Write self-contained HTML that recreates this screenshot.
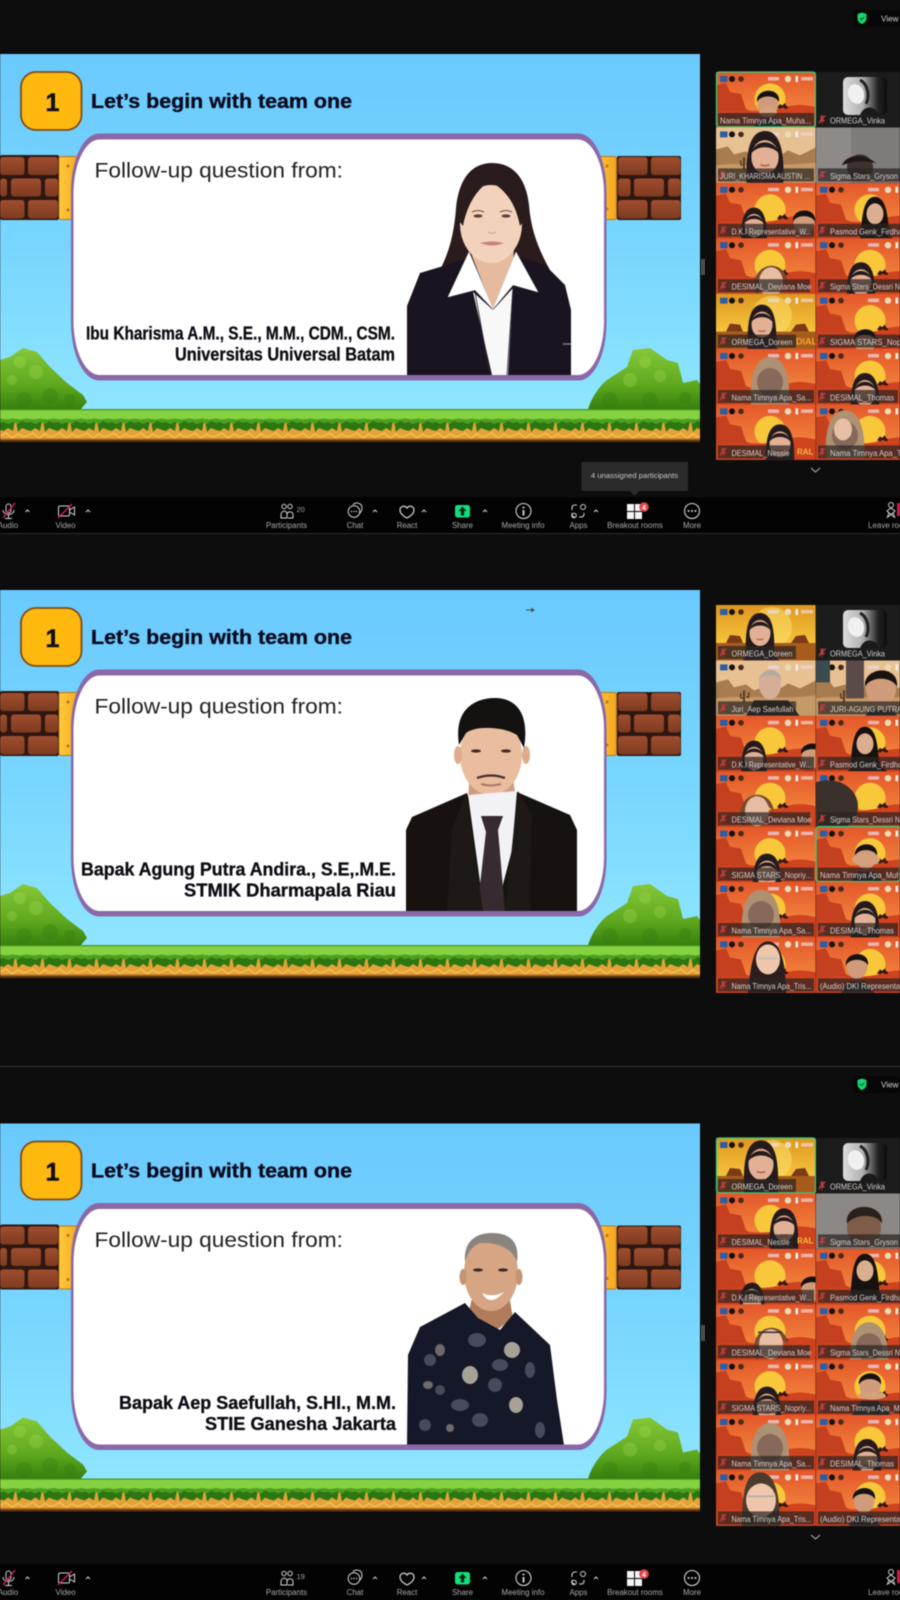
<!DOCTYPE html>
<html><head><meta charset="utf-8"><title>Meeting</title>
<style>
html,body{margin:0;padding:0;background:#0d0d0e;width:900px;height:1600px;overflow:hidden}
svg{display:block;filter:blur(.45px)}
text{font-family:"Liberation Sans",sans-serif}
.h{font-weight:700;font-size:20px;fill:#0a0a20;stroke:#0a0a20;stroke-width:.35}
.f{font-size:21.5px;fill:#222}
.b{font-weight:700;font-size:18px;fill:#0c0c14;stroke:#0c0c14;stroke-width:.3}
.n{font-size:8.5px;fill:#d4d0ce}
.l{font-size:7.9px;fill:#a8a8a8;text-anchor:middle}
.bar{fill:#2a2422;fill-opacity:.72}
.one{font-weight:700;font-size:25px;fill:#111;stroke:#111;stroke-width:.5}
</style></head><body>
<svg xmlns="http://www.w3.org/2000/svg" width="900" height="1600" viewBox="0 0 900 1600">
<defs>
<linearGradient id="sky" x1="0" y1="0" x2="0" y2="1"><stop offset="0" stop-color="#6bcafd"/><stop offset=".5" stop-color="#78d6fe"/><stop offset="1" stop-color="#93e9ff"/></linearGradient>
<linearGradient id="brk" x1="0" y1="0" x2="0" y2="1"><stop offset="0" stop-color="#a04e2e"/><stop offset="1" stop-color="#7e3b20"/></linearGradient>
<linearGradient id="gold" x1="0" y1="0" x2="1" y2="0"><stop offset="0" stop-color="#ffc93a"/><stop offset="1" stop-color="#f2a51f"/></linearGradient>
<linearGradient id="bush" x1="0" y1="0" x2="0" y2="1"><stop offset="0" stop-color="#86c838"/><stop offset=".6" stop-color="#5ea81f"/><stop offset="1" stop-color="#357f0e"/></linearGradient>
<linearGradient id="des" x1="0" y1="0" x2="0" y2="1"><stop offset="0" stop-color="#e4572a"/><stop offset=".65" stop-color="#f0803a"/><stop offset="1" stop-color="#e96a2e"/></linearGradient>
<linearGradient id="yel" x1="0" y1="0" x2="0" y2="1"><stop offset="0" stop-color="#e0961f"/><stop offset=".7" stop-color="#f4c63e"/><stop offset="1" stop-color="#e0982a"/></linearGradient>
<linearGradient id="vk" x1="0" y1="0" x2="1" y2="0"><stop offset="0" stop-color="#dcdcdc"/><stop offset=".45" stop-color="#b0b0b0"/><stop offset=".8" stop-color="#222"/><stop offset="1" stop-color="#0c0c0c"/></linearGradient>
<pattern id="gr" width="27" height="33" patternUnits="userSpaceOnUse" y="409">
<rect width="27" height="33" fill="#e5a238"/>
<path d="M0 27L6 24 12 29 18 25 23 28 27 27" fill="none" stroke="#f5c45f" stroke-width="1.200"/>
<rect y="29.500" width="27" height="1.500" fill="#b06a1c"/>
<rect y="31" width="27" height="2" fill="#5a3410"/>
<path d="M0 0H27V21L22 19 18 23 15.500 9 13 22 8 19 4 22 0 21Z" fill="#2c7612"/>
<path d="M0 0H27V14L22 12 18 15 13 13 8 15 4 13 0 14Z" fill="#4e9e22"/>
<path d="M0 1H27V9.500L20 10.500 13 9.500 6 10.500 0 9.500Z" fill="#84d240"/>
<rect width="27" height="1.200" fill="#4f8f1d"/>
</pattern>
<clipPath id="t"><rect width="99.6" height="55.4"/></clipPath>
<clipPath id="in1"><rect x="72" y="139" width="532" height="236"/></clipPath>
<clipPath id="in2"><rect x="72" y="675" width="532" height="236"/></clipPath>
<clipPath id="in3"><rect x="72" y="1208" width="532" height="236.500"/></clipPath>

<g id="ic">
<rect x="4" y="4" width="7.500" height="6" fill="#2c5da6"/><circle cx="16" cy="7" r="3" fill="#14110f"/><circle cx="25" cy="7" r="2.800" fill="#4a2a1a"/>
<rect x="52" y="5" width="11" height="3.500" fill="#e8dcec" fill-opacity=".7"/><circle cx="72" cy="7" r="3.200" fill="#e8dcb8"/><rect x="79.500" y="4" width="2.600" height="6" fill="#f2f2f2"/><rect x="85" y="5" width="12" height="3.500" fill="#f0d0d0" fill-opacity=".75"/>
</g>
<g id="d">
<rect width="100" height="56" fill="url(#des)"/>
<circle cx="54" cy="27" r="15.500" fill="#f8c83a"/>
<path d="M0 13L10 11 14 20 25 22 30 37 42 42 0 44Z" fill="#c4401f"/>
<path d="M0 40C25 36 45 42 62 37S85 32 100 35V56H0Z" fill="#d0431f"/>
<path d="M61 36l3-4 2 1.500 3-2.500 1 2.500 2.500 2-2 1.500-4-1.500-2.500 1.500z" fill="#3a1510"/>
<use href="#ic"/>
</g>
<g id="j">
<rect width="100" height="56" fill="#e8c193"/>
<path d="M0 22L12 19 18 27 30 24 38 30 50 26 60 31 72 23 84 28 100 20V56H0Z" fill="#a97c4f"/>
<path d="M0 38C30 34 60 40 100 35V56H0Z" fill="#c49a66"/>
<path d="M27 42V30h2V42ZM24 38v-5h1.500v4h2v1.500ZM30 36h2v-4h1.500v5.500h-3.500Z" fill="#5b3b1f"/>
<use href="#ic"/>
</g>
<g id="y">
<rect width="100" height="56" fill="url(#yel)"/>
<circle cx="56" cy="22" r="20" fill="#fbe06a" fill-opacity=".55"/>
<path d="M10 38L14 30 24 31 27 38ZM75 38L80 31 89 30 93 38Z" fill="#7c3a16"/>
<path d="M0 38H100V56H0Z" fill="#a85c1c"/>
<use href="#ic"/>
</g>
<g id="mic"><path d="M-1.200-4h2.400v4.500h-2.400zM-2.500 0c0 2.200 5 2.200 5 0M0 2.500V4.500" fill="#a84040" stroke="#b04040" stroke-width=".7"/><path d="M-3.500 3.500L3.500-4.500" stroke="#c83838" stroke-width="1"/></g>

<g id="pw"><path d="M-14 26C-15 5-14-18 0-18S15 5 14 26Z" fill="#241a1c"/><ellipse cy="2" rx="10.500" ry="13" fill="#e2b094"/><path d="M-10.500-1C-8-12 8-12 10.500-1 5-7-5-7-10.500-1Z" fill="#241a1c"/><path d="M-3.500 8Q0 9.500 3.500 8" stroke="#b5574f" fill="none" stroke-width="1.200"/><path d="M-18 30L-8 19H8L20 30Z" fill="#2b2230"/></g>
<g id="pm"><ellipse cy="2" rx="10.500" ry="12.500" fill="#cf9b7a"/><path d="M-11 1C-13-13 13-15 11 1 8-6-7-7-11 1Z" fill="#17120f"/><path d="M-20 34L-8 17H8L22 34Z" fill="#2f2c30"/></g>
<g id="ph"><path d="M-19 30C-21 0-14-18 0-18S21 0 19 30Z" fill="#ae9072"/><ellipse cy="7" rx="13" ry="14" fill="#86695a"/></g>
<g id="pb"><path d="M-15 26C-13 12-14-18 0-18S13 12 15 26Z" fill="#17110f"/><ellipse cy="-1" rx="8.500" ry="10.500" fill="#dcae90"/><path d="M-22 30L-12 22H16L28 30Z" fill="#1c1820"/></g>
<g id="pf"><path d="M-16 20C-18-10 15-12 18 12L13 8C8-4-8-4-10 10L-12 30Z" fill="#7a4a30"/><ellipse cx="1" cy="12" rx="12" ry="15" fill="#e8bea2"/></g>
<g id="pv"><rect x="27" y="5" width="44" height="38" rx="5" fill="url(#vk)"/><ellipse cx="40" cy="22" rx="8" ry="10" fill="#f0f0f0" transform="rotate(-18 40 22)"/><path d="M44 8C52 12 54 24 50 32" stroke="#222" stroke-width="3" fill="none"/><path d="M44 43C48 33 58 33 64 43Z" fill="#1a1a1a"/></g>

<g id="tb">
<rect x="0" y="497" width="900" height="36" fill="#030303"/>
<rect x="0" y="533" width="900" height="1" fill="#2c2c2c"/>
<g fill="none" stroke="#d2d2d2" stroke-width="1">
<rect x="6" y="504" width="5" height="9" rx="2.500"/><path d="M3 510c0 6 11 6 11 0M8.500 515v3M5 518.500h7"/>
<path d="M25.500 512l2-2 2 2M86 512l2-2 2 2M373 512l2-2 2 2M422 512l2-2 2 2M483 512l2-2 2 2M594 512l2-2 2 2"/>
<rect x="58.500" y="506" width="11" height="10" rx="1.500"/><path d="M69.500 510l5-3v8l-5-3"/>
<circle cx="284" cy="506.500" r="2.200"/><circle cx="290" cy="506.500" r="2.200"/><path d="M281 518v-3c0-5 6-5 6-1v4zM288 518h5v-3c0-4-5-4-6-1"/>
<circle cx="354" cy="511.500" r="5.800"/><path d="M353 505c1-3 9-3 9 3 0 3-1 4-2 5"/>
<path d="M407 518c-4-2-7-5-7-8 0-4 5-5 7-2 2-3 7-2 7 2 0 3-3 6-7 8z" stroke-width="1.200"/>
<circle cx="523.500" cy="511" r="7.500" stroke-width="1.100"/>
<path d="M572 510v-2c0-2 1-3 3-3h2M572 513v1c0 2 1 3 3 3M584 513v1c0 2-1 3-3 3h-2" stroke-width="1.100"/><circle cx="583" cy="507" r="2.500"/><circle cx="574" cy="515.500" r="2.300"/>
<circle cx="692" cy="511" r="7.500" stroke-width="1.100"/>
<circle cx="891" cy="505" r="2.500"/><path d="M887 518l2-5-2-2 4-3 4 3-2 2 2 5M888 512l6 5M894 512l-6 5"/>
</g>
<path d="M3 518L15 503M58 518L72 504" stroke="#d8205a" stroke-width="1.400"/>
<g fill="#d8d8d8"><circle cx="351.500" cy="511.500" r=".7"/><circle cx="354" cy="511.500" r=".7"/><circle cx="356.500" cy="511.500" r=".7"/><circle cx="688.500" cy="511" r="1"/><circle cx="692" cy="511" r="1"/><circle cx="695.500" cy="511" r="1"/><circle cx="523.500" cy="507.500" r="1"/><rect x="522.600" y="510" width="1.800" height="5.500"/></g>
<rect x="455" y="505" width="15" height="12.500" rx="2.500" fill="#12de7a"/><path d="M462.500 506.500l4 4.500h-2.400v4.500h-3.200v-4.500h-2.400z" fill="#06231a"/>
<g fill="#f4f4f4"><rect x="627" y="504" width="7" height="7"/><rect x="635" y="504" width="7" height="7"/><rect x="627" y="512" width="7" height="7"/><rect x="635" y="512" width="7" height="7"/></g>
<circle cx="644" cy="507" r="4.800" fill="#e2454c"/>
<rect x="897" y="503" width="3" height="13" fill="#c8204e"/>
</g>
<g id="sh"><rect x="853" y="10" width="47" height="17" rx="3" fill="#070707"/><path d="M862 12.500l4.500 1.500v4c0 3-2 5-4.500 6-2.500-1-4.500-3-4.500-6v-4z" fill="#16d56f"/><path d="M859.800 18l1.700 1.700 2.800-3" stroke="#052" stroke-width="1" fill="none"/></g>
<g id="sl">
<rect x="0" y="54" width="700" height="388" fill="url(#sky)"/>
<rect x="0" y="155" width="59" height="65" rx="2" fill="#2e1710"/><rect x="617" y="156" width="64" height="64" rx="2" fill="#2e1710"/>
<g fill="url(#brk)"><rect x="0" y="157" width="24.500" height="18" rx="3"/><rect x="28" y="157" width="30" height="18" rx="3"/><rect x="0" y="178.500" width="7" height="18" rx="3"/><rect x="11" y="178.500" width="30" height="18" rx="3"/><rect x="45" y="178.500" width="13" height="18" rx="3"/><rect x="0" y="200" width="24.500" height="18.500" rx="3"/><rect x="28" y="200" width="30" height="18.500" rx="3"/>
<rect x="618" y="157" width="29.500" height="18" rx="3"/><rect x="651" y="157" width="29.500" height="18" rx="3"/><rect x="618" y="178.500" width="12.500" height="18" rx="3"/><rect x="634" y="178.500" width="30" height="18" rx="3"/><rect x="668" y="178.500" width="12.500" height="18" rx="3"/><rect x="618" y="200" width="29.500" height="18.500" rx="3"/><rect x="651" y="200" width="29.500" height="18.500" rx="3"/></g>
<rect x="59" y="156.500" width="22" height="63" rx="2" fill="url(#gold)" stroke="#b9731a" stroke-width="1"/><rect x="595" y="156.500" width="21.500" height="63" rx="2" fill="url(#gold)" stroke="#b9731a" stroke-width="1"/>
<circle cx="68" cy="166" r="1.500" fill="#b9731a"/><circle cx="68" cy="210" r="1.500" fill="#b9731a"/><circle cx="607" cy="166" r="1.500" fill="#b9731a"/><circle cx="607" cy="209" r="1.500" fill="#b9731a"/>
<rect x="71" y="133.500" width="535.500" height="247" rx="28" ry="58" fill="#8b68a8"/>
<rect x="73.500" y="139.500" width="530.500" height="235.500" rx="26" ry="54" fill="#fff"/>
<path d="M0 360L10 357 23 348 37 352 50 367 67 383 83 395 87 402 80 410H0Z" fill="url(#bush)"/>
<path d="M588 410C590 400 600 385 607 380L627 367 633 350 650 348 667 360 678 363 683 383 697 380 700 384V410Z" fill="url(#bush)"/>
<g fill="#a4da52" fill-opacity=".3"><circle cx="20" cy="362" r="6"/><circle cx="36" cy="372" r="7"/><circle cx="12" cy="380" r="5"/><circle cx="645" cy="362" r="6"/><circle cx="630" cy="380" r="7"/><circle cx="660" cy="376" r="6"/></g>
<g fill="#2e7a0c" fill-opacity=".3"><circle cx="50" cy="396" r="8"/><circle cx="24" cy="400" r="8"/><circle cx="70" cy="400" r="6"/><circle cx="610" cy="400" r="8"/><circle cx="650" cy="400" r="8"/><circle cx="685" cy="398" r="6"/></g>
<rect x="0" y="409" width="700" height="33" fill="url(#gr)"/>
<rect x="21" y="72" width="60.500" height="58" rx="15" fill="#ffb80e" stroke="#7c4c1a" stroke-width="1.800"/>
</g>
</defs>

<rect width="900" height="1600" fill="#0d0d0e"/>
<rect x="0" y="1066" width="900" height="1" fill="#3a3a3a"/>

<!-- slides -->
<use href="#sl"/>
<use href="#sl" y="536"/>
<use href="#sl" y="1069.500"/>

<text class="one" x="45.500" y="111">1</text>
<text class="one" x="45.500" y="647">1</text>
<text class="one" x="45.500" y="1180.500">1</text>
<text class="h" x="91" y="108" textLength="261" lengthAdjust="spacingAndGlyphs">Let’s begin with team one</text>
<text class="h" x="91" y="644" textLength="261" lengthAdjust="spacingAndGlyphs">Let’s begin with team one</text>
<text class="h" x="91" y="1177.500" textLength="261" lengthAdjust="spacingAndGlyphs">Let’s begin with team one</text>
<text class="f" x="94.500" y="177.500" textLength="248.500" lengthAdjust="spacingAndGlyphs">Follow-up question from:</text>
<text class="f" x="94.500" y="713.500" textLength="248.500" lengthAdjust="spacingAndGlyphs">Follow-up question from:</text>
<text class="f" x="94.500" y="1247" textLength="248.500" lengthAdjust="spacingAndGlyphs">Follow-up question from:</text>

<!-- portrait 1 -->
<g clip-path="url(#in1)">
<path d="M492 163C472 163 459 178 456 208 454 235 449 252 440 270H550C540 252 531 232 529 205 526 178 513 163 492 163Z" fill="#2a1b1c"/>
<path d="M472 245H514L513 270 493 308 472 270Z" fill="#e6bb9d"/>
<ellipse cx="491" cy="224" rx="31" ry="39" fill="#f3d2bc"/>
<path d="M460 222C458 195 470 181 489 181 480 188 468 200 463 226ZM523 222C525 195 512 181 489 181 503 188 515 200 520 226Z" fill="#2a1b1c"/>
<path d="M472 212Q478 209 484 212M500 212Q506 209 512 212" stroke="#6b4a3e" stroke-width="1" fill="none"/>
<ellipse cx="478" cy="216" rx="4.500" ry="1.600" fill="#5a3d36"/><ellipse cx="506" cy="216" rx="4.500" ry="1.600" fill="#5a3d36"/>
<path d="M488 232Q492 235 496 232" stroke="#d9a58c" stroke-width="1.200" fill="none"/>
<path d="M480 243Q492 240 504 243 492 248 480 243Z" fill="#c98280"/>
<path d="M407 375V306L420 273 450 264 472 256 493 310 516 256 545 265 565 285 571 310V375Z" fill="#1a1420"/>
<path d="M473 292L493 310 513 288 508 375H492Z" fill="#f8f8f8"/>
<path d="M469 252L448 297 475 290 493 309ZM516 252L538 292 513 285 493 309Z" fill="#fff" stroke="#ddd" stroke-width=".5"/>
<path d="M475 292L490 375M513 287L507 375" stroke="#2b2430" stroke-width=".8" fill="none"/>
<path d="M563 344h8" stroke="#777" stroke-width="1.500"/>
</g>
<text class="b" x="86" y="339.500" textLength="309" lengthAdjust="spacingAndGlyphs">Ibu Kharisma A.M., S.E., M.M., CDM., CSM.</text>
<text class="b" x="175" y="360.500" textLength="220" lengthAdjust="spacingAndGlyphs">Universitas Universal Batam</text>

<!-- portrait 2 -->
<g clip-path="url(#in2)">
<path d="M470 770H512L516 800 492 825 468 800Z" fill="#cf9e80"/>
<ellipse cx="491" cy="755" rx="31" ry="40" fill="#eabd9f"/>
<ellipse cx="458" cy="755" rx="4" ry="9" fill="#dcac8c"/><ellipse cx="526" cy="755" rx="4" ry="9" fill="#dcac8c"/>
<path d="M459 745C453 705 480 698 495 698 515 698 530 712 524 748L517 735C505 727 476 725 466 733Z" fill="#141111"/>
<ellipse cx="476" cy="751" rx="5" ry="1.600" fill="#3e2a24"/><ellipse cx="506" cy="751" rx="5" ry="1.600" fill="#3e2a24"/>
<path d="M477 778Q491 773 505 778" stroke="#4a2e26" stroke-width="2.200" fill="none"/>
<path d="M481 784Q491 787 501 784" stroke="#b5736a" stroke-width="2" fill="none"/>
<path d="M406 911V830L412 817 467 793 490 860 517 792 570 815 577 830V911Z" fill="#17120f"/>
<path d="M468 795L517 791 512 850 496 911H484L477 860Z" fill="#f2f2f6"/>
<path d="M481 816L503 816 498 830 505 911H477L486 832Z" fill="#352b30"/>
<path d="M466 793L474 850 483 911H447L452 830ZM518 791L505 911H530L532 815Z" fill="#1e1916"/>
</g>
<text class="b" x="81" y="875.500" textLength="315" lengthAdjust="spacingAndGlyphs">Bapak Agung Putra Andira., S.E,.M.E.</text>
<text class="b" x="184" y="896.500" textLength="212" lengthAdjust="spacingAndGlyphs">STMIK Dharmapala Riau</text>

<!-- portrait 3 -->
<g clip-path="url(#in3)">
<path d="M474 1290H508L513 1318 490 1335 468 1315Z" fill="#b07c5c"/>
<ellipse cx="491" cy="1273" rx="27" ry="38" fill="#d6a584"/>
<ellipse cx="463" cy="1277" rx="3.500" ry="8" fill="#c49372"/><ellipse cx="519" cy="1277" rx="3.500" ry="8" fill="#c49372"/>
<path d="M465 1262C463 1238 480 1233 492 1233 508 1233 520 1240 517 1262 512 1247 495 1242 480 1243 472 1246 468 1252 465 1262Z" fill="#8a847e"/>
<path d="M482 1293Q493 1298 504 1292 496 1301 490 1300 485 1299 482 1293Z" fill="#fff"/>
<ellipse cx="478" cy="1270" rx="5" ry="1.600" fill="#3e2a24"/><ellipse cx="503" cy="1270" rx="5" ry="1.600" fill="#3e2a24"/>
<path d="M407 1445L408 1355 420 1327 465 1303 478 1318 500 1330 515 1312 550 1345 557 1400 564 1445Z" fill="#141828"/>
<g fill="#a8a296"><ellipse cx="470" cy="1375" rx="8" ry="9"/><ellipse cx="512" cy="1350" rx="8" ry="8"/><ellipse cx="516" cy="1405" rx="7" ry="8"/><ellipse cx="440" cy="1350" rx="5" ry="6" fill-opacity=".6"/><ellipse cx="428" cy="1385" rx="5" ry="4" fill-opacity=".6"/><ellipse cx="450" cy="1428" rx="4" ry="4" fill-opacity=".6"/></g>
<g fill="#555c68" fill-opacity=".75"><ellipse cx="477" cy="1340" rx="9" ry="7"/><ellipse cx="500" cy="1365" rx="8" ry="6"/><ellipse cx="495" cy="1385" rx="7" ry="7"/><ellipse cx="460" cy="1405" rx="9" ry="6"/><ellipse cx="530" cy="1370" rx="5" ry="8"/><ellipse cx="425" cy="1425" rx="6" ry="6"/><ellipse cx="480" cy="1420" rx="8" ry="7"/><ellipse cx="540" cy="1430" rx="5" ry="8"/><ellipse cx="430" cy="1360" rx="6" ry="6"/><ellipse cx="440" cy="1390" rx="5" ry="5"/></g>
</g>
<text class="b" x="119" y="1409" textLength="277" lengthAdjust="spacingAndGlyphs">Bapak Aep Saefullah, S.HI., M.M.</text>
<text class="b" x="205" y="1430" textLength="191" lengthAdjust="spacingAndGlyphs">STIE Ganesha Jakarta</text>

<!-- panel 1 tiles -->
<g transform="translate(716 72)" clip-path="url(#t)"><use href="#d"/><use href="#pm" x="52" y="29"/><ellipse cx="52" cy="40" rx="9" ry="5" fill="#d5a07e"/><rect x="2" y="41" width="96" height="13" class="bar"/><text class="n" x="4" y="51.500" textLength="91" lengthAdjust="spacingAndGlyphs">Nama Timnya Apa_Muha...</text></g>
<rect x="716.500" y="72" width="99" height="55" rx="3" fill="none" stroke="#2fd27c" stroke-width="1.300"/>
<g transform="translate(816 72)" clip-path="url(#t)"><rect width="100" height="56" fill="#1c1c1c"/><use href="#pv"/><use href="#mic" x="6" y="48"/><text class="n" x="14" y="51.500" textLength="55" lengthAdjust="spacingAndGlyphs">ORMEGA_Vinka</text></g>
<g transform="translate(716 127.400)" clip-path="url(#t)"><use href="#j"/><use href="#pw" transform="translate(49 27) scale(1.300)"/><rect x="2" y="41" width="96" height="13" class="bar"/><use href="#mic" x="6" y="48"/><text class="n" x="4" y="51.500" textLength="90" lengthAdjust="spacingAndGlyphs">JURI_KHARISMA AUSTIN ...</text></g>
<g transform="translate(816 127.400)" clip-path="url(#t)"><rect width="100" height="56" fill="#7e7c7b"/><rect x="0" width="35" height="56" fill="#8d8a88"/><ellipse cx="44" cy="40" rx="13" ry="13" fill="#3c3230"/><path d="M26 38C30 26 50 26 60 36 48 32 36 34 26 38Z" fill="#201815"/><rect x="2" y="41" width="82" height="13" class="bar"/><use href="#mic" x="6" y="48"/><text class="n" x="14" y="51.500" textLength="68" lengthAdjust="spacingAndGlyphs">Sigma Stars_Gryson</text></g>
<g transform="translate(716 182.800)" clip-path="url(#t)"><use href="#d"/><use href="#pw" transform="translate(38 41) scale(.9)"/><use href="#pm" x="88" y="38"/><rect x="2" y="41" width="96" height="13" class="bar"/><use href="#mic" x="7" y="48"/><text class="n" x="15.500" y="51.500" textLength="80" lengthAdjust="spacingAndGlyphs">D.K.I Representative_W...</text></g>
<g transform="translate(816 182.800)" clip-path="url(#t)"><use href="#d"/><use href="#pb" x="59" y="32"/><rect x="2" y="41" width="96" height="13" class="bar"/><use href="#mic" x="6" y="48"/><text class="n" x="14" y="51.500" textLength="80" lengthAdjust="spacingAndGlyphs">Pasmod Genk_Firdhaus</text></g>
<g transform="translate(716 238.200)" clip-path="url(#t)"><use href="#d"/><use href="#pf" x="54" y="32"/><rect x="2" y="41" width="92" height="13" class="bar"/><use href="#mic" x="7" y="48"/><text class="n" x="15.500" y="51.500" textLength="80" lengthAdjust="spacingAndGlyphs">DESIMAL_Deviana Moe</text></g>
<g transform="translate(816 238.200)" clip-path="url(#t)"><use href="#d"/><use href="#pw" x="45" y="42"/><rect x="2" y="41" width="96" height="13" class="bar"/><use href="#mic" x="6" y="48"/><text class="n" x="14" y="51.500" textLength="70" lengthAdjust="spacingAndGlyphs">Sigma Stars_Dessri N</text></g>
<g transform="translate(716 293.600)" clip-path="url(#t)"><use href="#y"/><use href="#pw" x="46" y="29"/><rect x="2" y="41" width="78" height="13" class="bar"/><use href="#mic" x="7" y="48"/><text class="n" x="15.500" y="51.500" textLength="61" lengthAdjust="spacingAndGlyphs">ORMEGA_Doreen</text><text x="80" y="51" style="font-weight:700;font-size:9px;fill:#f1a92b">DIAL</text></g>
<g transform="translate(816 293.600)" clip-path="url(#t)"><use href="#d"/><use href="#pm" x="49" y="46"/><rect x="2" y="41" width="96" height="13" class="bar"/><use href="#mic" x="6" y="48"/><text class="n" x="14" y="51.500" textLength="90" lengthAdjust="spacingAndGlyphs">SIGMA STARS_Nopriyadi</text></g>
<g transform="translate(716 349)" clip-path="url(#t)"><use href="#d"/><use href="#ph" x="54" y="26"/><rect x="2" y="41" width="96" height="13" class="bar"/><use href="#mic" x="7" y="48"/><text class="n" x="15.500" y="51.500" textLength="80" lengthAdjust="spacingAndGlyphs">Nama Timnya Apa_Sa...</text></g>
<g transform="translate(816 349)" clip-path="url(#t)"><use href="#d"/><use href="#pw" x="49" y="42"/><rect x="2" y="41" width="80" height="13" class="bar"/><use href="#mic" x="6" y="48"/><text class="n" x="14" y="51.500" textLength="64" lengthAdjust="spacingAndGlyphs">DESIMAL_Thomas</text></g>
<g transform="translate(716 404.400)" clip-path="url(#t)"><use href="#d"/><use href="#pw" x="64" y="38"/><rect x="2" y="41" width="76" height="13" class="bar"/><use href="#mic" x="7" y="48"/><text class="n" x="15.500" y="51.500" textLength="58" lengthAdjust="spacingAndGlyphs">DESIMAL_Nessie</text><text x="81" y="50" style="font-weight:700;font-size:8px;fill:#f3bb3a">RAL</text></g>
<g transform="translate(816 404.400)" clip-path="url(#t)"><use href="#d"/><use href="#ph" transform="translate(29 24)"/><ellipse cx="27" cy="25" rx="9" ry="11" fill="#e6bfa4"/><rect x="2" y="41" width="96" height="13" class="bar"/><use href="#mic" x="6" y="48"/><text class="n" x="14" y="51.500" textLength="88" lengthAdjust="spacingAndGlyphs">Nama Timnya Apa_Trisna</text></g>

<!-- panel 2 tiles -->
<g transform="translate(716 605)" clip-path="url(#t)"><use href="#y"/><use href="#pw" x="44" y="26"/><rect x="2" y="41" width="78" height="13" class="bar"/><use href="#mic" x="7" y="48"/><text class="n" x="15.500" y="51.500" textLength="61" lengthAdjust="spacingAndGlyphs">ORMEGA_Doreen</text></g>
<g transform="translate(816 605)" clip-path="url(#t)"><rect width="100" height="56" fill="#1c1c1c"/><use href="#pv"/><use href="#mic" x="6" y="48"/><text class="n" x="14" y="51.500" textLength="55" lengthAdjust="spacingAndGlyphs">ORMEGA_Vinka</text></g>
<g transform="translate(716 660.400)" clip-path="url(#t)"><use href="#j"/><ellipse cx="54" cy="24" rx="11" ry="15" fill="#d6ad96"/><path d="M43 20C43 8 66 6 65 20 60 12 48 13 43 20Z" fill="#b0aaa4"/><path d="M30 56L38 40H72L84 56Z" fill="#2a2420"/><rect x="2" y="41" width="78" height="13" class="bar"/><use href="#mic" x="7" y="48"/><text class="n" x="15.500" y="51.500" textLength="62" lengthAdjust="spacingAndGlyphs">Juri_Aep Saefullah</text></g>
<g transform="translate(816 660.400)" clip-path="url(#t)"><use href="#j"/><rect x="30" y="0" width="18" height="38" fill="#5a4a48"/><rect width="14" height="22" fill="#3a4c50"/><use href="#pm" transform="translate(65 25) scale(1.450)"/><rect x="2" y="41" width="96" height="13" class="bar"/><use href="#mic" x="6" y="48"/><text class="n" x="14" y="51.500" textLength="72" lengthAdjust="spacingAndGlyphs">JURI-AGUNG PUTRA</text></g>
<g transform="translate(716 715.800)" clip-path="url(#t)"><use href="#d"/><use href="#pw" transform="translate(38 41) scale(.9)"/><use href="#pm" x="96" y="38"/><rect x="2" y="41" width="96" height="13" class="bar"/><use href="#mic" x="7" y="48"/><text class="n" x="15.500" y="51.500" textLength="80" lengthAdjust="spacingAndGlyphs">D.K.I Representative_W...</text></g>
<g transform="translate(816 715.800)" clip-path="url(#t)"><use href="#d"/><use href="#pb" x="49" y="29"/><rect x="2" y="41" width="96" height="13" class="bar"/><use href="#mic" x="6" y="48"/><text class="n" x="14" y="51.500" textLength="80" lengthAdjust="spacingAndGlyphs">Pasmod Genk_Firdhaus</text></g>
<g transform="translate(716 771.200)" clip-path="url(#t)"><use href="#d"/><use href="#pf" transform="translate(40 28)"/><rect x="2" y="41" width="92" height="13" class="bar"/><use href="#mic" x="7" y="48"/><text class="n" x="15.500" y="51.500" textLength="80" lengthAdjust="spacingAndGlyphs">DESIMAL_Deviana Moe</text></g>
<g transform="translate(816 771.200)" clip-path="url(#t)"><use href="#d"/><ellipse cx="12" cy="35" rx="30" ry="26" fill="#3a302c"/><rect x="2" y="41" width="96" height="13" class="bar"/><use href="#mic" x="6" y="48"/><text class="n" x="14" y="51.500" textLength="70" lengthAdjust="spacingAndGlyphs">Sigma Stars_Dessri N</text></g>
<g transform="translate(716 826.600)" clip-path="url(#t)"><use href="#d"/><use href="#pw" x="51" y="45"/><rect x="2" y="41" width="96" height="13" class="bar"/><use href="#mic" x="7" y="48"/><text class="n" x="15.500" y="51.500" textLength="80" lengthAdjust="spacingAndGlyphs">SIGMA STARS_Nopriy...</text></g>
<g transform="translate(816 826.600)" clip-path="url(#t)"><use href="#d"/><use href="#pm" x="50" y="28"/><ellipse cx="50" cy="33" rx="14" ry="6" fill="#d5a07e"/><rect x="2" y="41" width="96" height="13" class="bar"/><text class="n" x="4" y="51.500" textLength="91" lengthAdjust="spacingAndGlyphs">Nama Timnya Apa_Muha...</text></g>
<rect x="816" y="826.600" width="84" height="55" rx="3" fill="none" stroke="#2fd27c" stroke-width="1.300"/>
<g transform="translate(716 882)" clip-path="url(#t)"><use href="#d"/><use href="#ph" x="45" y="26"/><rect x="2" y="41" width="96" height="13" class="bar"/><use href="#mic" x="7" y="48"/><text class="n" x="15.500" y="51.500" textLength="80" lengthAdjust="spacingAndGlyphs">Nama Timnya Apa_Sa...</text></g>
<g transform="translate(816 882)" clip-path="url(#t)"><use href="#d"/><use href="#pw" x="49" y="37"/><rect x="2" y="41" width="80" height="13" class="bar"/><use href="#mic" x="6" y="48"/><text class="n" x="14" y="51.500" textLength="64" lengthAdjust="spacingAndGlyphs">DESIMAL_Thomas</text></g>
<g transform="translate(716 937.400)" clip-path="url(#t)"><use href="#d"/><path d="M32 56C34 30 38 4 52 4S70 30 70 56Z" fill="#2a1e1e"/><ellipse cx="52" cy="22" rx="12" ry="15" fill="#eec6ac"/><path d="M42 21h20" stroke="#bbb" stroke-width="1.500"/><rect x="2" y="41" width="96" height="13" class="bar"/><use href="#mic" x="7" y="48"/><text class="n" x="15.500" y="51.500" textLength="80" lengthAdjust="spacingAndGlyphs">Nama Timnya Apa_Tris...</text></g>
<g transform="translate(816 937.400)" clip-path="url(#t)"><use href="#d"/><use href="#pm" x="41" y="27"/><rect x="2" y="41" width="96" height="13" class="bar"/><text class="n" x="4" y="51.500" textLength="92" lengthAdjust="spacingAndGlyphs">(Audio) DKI Representative</text></g>

<!-- panel 3 tiles -->
<g transform="translate(716 1138)" clip-path="url(#t)"><use href="#y"/><use href="#pw" transform="translate(45 24) scale(1.200)"/><rect x="2" y="41" width="78" height="13" class="bar"/><use href="#mic" x="7" y="48"/><text class="n" x="15.500" y="51.500" textLength="61" lengthAdjust="spacingAndGlyphs">ORMEGA_Doreen</text></g>
<rect x="716.500" y="1138" width="99" height="55" rx="3" fill="none" stroke="#2fd27c" stroke-width="1.300"/>
<g transform="translate(816 1138)" clip-path="url(#t)"><rect width="100" height="56" fill="#1c1c1c"/><use href="#pv"/><use href="#mic" x="6" y="48"/><text class="n" x="14" y="51.500" textLength="55" lengthAdjust="spacingAndGlyphs">ORMEGA_Vinka</text></g>
<g transform="translate(716 1193.400)" clip-path="url(#t)"><use href="#d"/><use href="#pw" x="68" y="33"/><rect x="2" y="41" width="76" height="13" class="bar"/><use href="#mic" x="7" y="48"/><text class="n" x="15.500" y="51.500" textLength="58" lengthAdjust="spacingAndGlyphs">DESIMAL_Nessie</text><text x="81" y="50" style="font-weight:700;font-size:8px;fill:#f3bb3a">RAL</text></g>
<g transform="translate(816 1193.400)" clip-path="url(#t)"><rect width="100" height="56" fill="#8c8886"/><ellipse cx="48" cy="34" rx="17" ry="20" fill="#7e5c48"/><path d="M31 30C28 8 68 8 66 30 60 20 40 20 31 30Z" fill="#2a201c"/><rect x="2" y="41" width="82" height="13" class="bar"/><use href="#mic" x="6" y="48"/><text class="n" x="14" y="51.500" textLength="68" lengthAdjust="spacingAndGlyphs">Sigma Stars_Gryson</text></g>
<g transform="translate(716 1248.800)" clip-path="url(#t)"><use href="#d"/><use href="#pw" transform="translate(36 50) scale(.9)"/><use href="#pm" x="96" y="38"/><rect x="2" y="41" width="96" height="13" class="bar"/><use href="#mic" x="7" y="48"/><text class="n" x="15.500" y="51.500" textLength="80" lengthAdjust="spacingAndGlyphs">D.K.I Representative_W...</text></g>
<g transform="translate(816 1248.800)" clip-path="url(#t)"><use href="#d"/><use href="#pb" x="49" y="23"/><rect x="2" y="41" width="96" height="13" class="bar"/><use href="#mic" x="6" y="48"/><text class="n" x="14" y="51.500" textLength="80" lengthAdjust="spacingAndGlyphs">Pasmod Genk_Firdhaus</text></g>
<g transform="translate(716 1304.200)" clip-path="url(#t)"><use href="#d"/><use href="#pf" x="54" y="28"/><path d="M42 28h24" stroke="#333" stroke-width="1.500"/><rect x="2" y="41" width="92" height="13" class="bar"/><use href="#mic" x="7" y="48"/><text class="n" x="15.500" y="51.500" textLength="80" lengthAdjust="spacingAndGlyphs">DESIMAL_Deviana Moe</text></g>
<g transform="translate(816 1304.200)" clip-path="url(#t)"><use href="#d"/><use href="#ph" x="53" y="36"/><rect x="2" y="41" width="96" height="13" class="bar"/><use href="#mic" x="6" y="48"/><text class="n" x="14" y="51.500" textLength="70" lengthAdjust="spacingAndGlyphs">Sigma Stars_Dessri N</text></g>
<g transform="translate(716 1359.600)" clip-path="url(#t)"><use href="#d"/><use href="#pw" x="51" y="45"/><rect x="2" y="41" width="96" height="13" class="bar"/><use href="#mic" x="7" y="48"/><text class="n" x="15.500" y="51.500" textLength="80" lengthAdjust="spacingAndGlyphs">SIGMA STARS_Nopriy...</text></g>
<g transform="translate(816 1359.600)" clip-path="url(#t)"><use href="#d"/><use href="#pm" x="54" y="24"/><ellipse cx="56" cy="36" rx="14" ry="4" fill="#d5a07e"/><rect x="2" y="41" width="96" height="13" class="bar"/><use href="#mic" x="6" y="48"/><text class="n" x="14" y="51.500" textLength="88" lengthAdjust="spacingAndGlyphs">Nama Timnya Apa_Muha...</text></g>
<g transform="translate(716 1415)" clip-path="url(#t)"><use href="#d"/><use href="#ph" x="54" y="26"/><rect x="2" y="41" width="96" height="13" class="bar"/><use href="#mic" x="7" y="48"/><text class="n" x="15.500" y="51.500" textLength="80" lengthAdjust="spacingAndGlyphs">Nama Timnya Apa_Sa...</text></g>
<g transform="translate(816 1415)" clip-path="url(#t)"><use href="#d"/><use href="#pw" x="51" y="42"/><rect x="2" y="41" width="80" height="13" class="bar"/><use href="#mic" x="6" y="48"/><text class="n" x="14" y="51.500" textLength="64" lengthAdjust="spacingAndGlyphs">DESIMAL_Thomas</text></g>
<g transform="translate(716 1470.400)" clip-path="url(#t)"><use href="#d"/><path d="M26 56C26 20 30 2 44 2S64 20 64 56Z" fill="#4c3a2c"/><ellipse cx="45" cy="30" rx="15" ry="17" fill="#eec6ac"/><path d="M32 26h26" stroke="#aaa" stroke-width="1.500"/><rect x="2" y="41" width="96" height="13" class="bar"/><use href="#mic" x="7" y="48"/><text class="n" x="15.500" y="51.500" textLength="80" lengthAdjust="spacingAndGlyphs">Nama Timnya Apa_Tris...</text></g>
<g transform="translate(816 1470.400)" clip-path="url(#t)"><use href="#d"/><use href="#pm" x="48" y="28"/><rect x="2" y="41" width="96" height="13" class="bar"/><text class="n" x="4" y="51.500" textLength="92" lengthAdjust="spacingAndGlyphs">(Audio) DKI Representative</text></g>

<!-- splitters / chevrons -->
<path d="M702 259v16M704 259v16M702 1325v16M704 1325v16" stroke="#8a8a8a" stroke-width="1"/>
<path d="M811 468l4.500 4 4.500-4M811 1535l4.500 4 4.500-4" stroke="#a8a8a8" stroke-width="1.100" fill="none"/>
<path d="M526 610h7M531 608l3 2-3 2" stroke="#444" fill="none"/>

<!-- toolbars -->
<use href="#tb"/>
<use href="#tb" y="1067"/>
<use href="#sh"/>
<use href="#sh" y="1066"/>
<text x="881" y="21.500" style="font-size:8.200px;fill:#d0d0d0">View</text>
<text x="881" y="1087.500" style="font-size:8.200px;fill:#d0d0d0">View</text>

<rect x="581.500" y="462" width="106.500" height="29" fill="#2b2b2b"/><path d="M630 491h9l-4.500 5z" fill="#2b2b2b"/>
<text x="634.500" y="478" style="font-size:7.700px;fill:#c8c8c8;text-anchor:middle">4 unassigned participants</text>

<text class="l" x="8" y="528">Audio</text><text class="l" x="65.500" y="528">Video</text><text class="l" x="286.500" y="528">Participants</text><text class="l" x="355" y="528">Chat</text><text class="l" x="407" y="528">React</text><text class="l" x="462.500" y="528">Share</text><text class="l" x="523" y="528">Meeting info</text><text class="l" x="578.500" y="528">Apps</text><text class="l" x="635" y="528">Breakout rooms</text><text class="l" x="692" y="528">More</text><text class="l" x="889" y="528">Leave room</text>
<text x="296.500" y="512" style="font-size:7.500px;fill:#a0a0a0">20</text>
<text x="642" y="510" style="font-size:7px;font-weight:700;fill:#fff">4</text>

<text class="l" x="8" y="1595">Audio</text><text class="l" x="65.500" y="1595">Video</text><text class="l" x="286.500" y="1595">Participants</text><text class="l" x="355" y="1595">Chat</text><text class="l" x="407" y="1595">React</text><text class="l" x="462.500" y="1595">Share</text><text class="l" x="523" y="1595">Meeting info</text><text class="l" x="578.500" y="1595">Apps</text><text class="l" x="635" y="1595">Breakout rooms</text><text class="l" x="692" y="1595">More</text><text class="l" x="889" y="1595">Leave room</text>
<text x="296.500" y="1579" style="font-size:7.500px;fill:#a0a0a0">19</text>
<text x="642" y="1577" style="font-size:7px;font-weight:700;fill:#fff">4</text>
</svg>
</body></html>
